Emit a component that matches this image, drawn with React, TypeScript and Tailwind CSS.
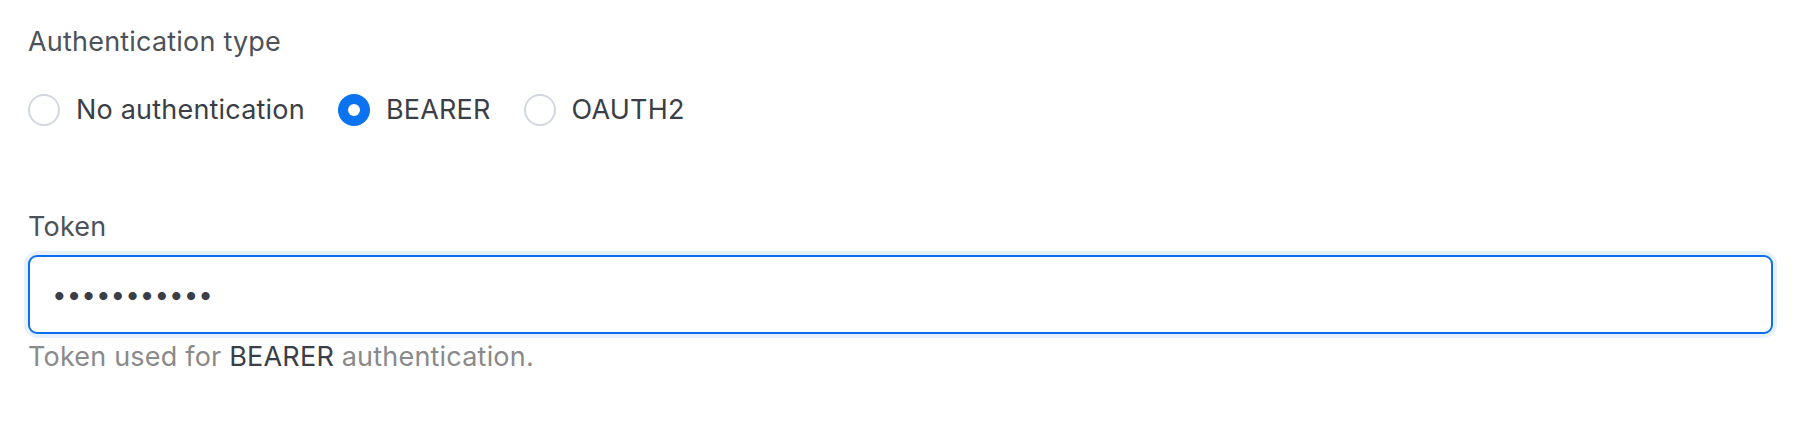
import { useState } from "react";

const OPTIONS = [
  { value: "none", label: "No authentication" },
  { value: "bearer", label: "BEARER" },
  { value: "oauth2", label: "OAUTH2" },
];

export default function App() {
  const [auth, setAuth] = useState("bearer");
  const [token, setToken] = useState("abcdefghijk");

  return (
    <div
      className="w-full h-[422px] bg-white pl-[28px] pr-[31px] pt-[22px]"
      style={{ fontFamily: "Inter, 'Noto Sans', sans-serif" }}
    >
      {/* Auth type */}
      <p className="text-[27px] tracking-[0.2px] leading-[40px] text-[#4d5159]">Authentication type</p>
      <div className="flex items-center gap-[33px] mt-[28px] h-[40px]">
        {OPTIONS.map((o) => {
          const on = auth === o.value;
          return (
            <label key={o.value} className="flex items-center gap-[16px] cursor-pointer">
              <input
                type="radio"
                name="auth"
                checked={on}
                onChange={() => setAuth(o.value)}
                className="sr-only"
              />
              <span
                className={
                  on
                    ? "w-[32px] h-[32px] rounded-full bg-[#0b72f0] flex items-center justify-center"
                    : "w-[32px] h-[32px] rounded-full border-2 border-[#d3d8e0] bg-white"
                }
              >
                {on && <span className="w-[12px] h-[12px] rounded-full bg-white" />}
              </span>
              <span className="text-[27px] tracking-[0.2px] leading-[40px] text-[#3a3e46]">{o.label}</span>
            </label>
          );
        })}
      </div>

      {/* Token */}
      <p className="text-[27px] tracking-[0.2px] leading-[40px] text-[#4d5159] mt-[77px]">Token</p>
      <div className="mt-[8px] rounded-[10px] ring-4 ring-[#e7f1fd]">
        <input
          type="password"
          value={token}
          onChange={(e) => setToken(e.target.value)}
          className="block w-full h-[79px] rounded-[9px] border-2 border-[#0b6ff2] bg-white px-[22px] text-[26px] text-[#3a3e46] outline-none"
        />
      </div>
      <p className="text-[27px] tracking-[0.2px] leading-[40px] text-[#8a8a8a] mt-[3px]">
        Token used for <span className="text-[#3a3e46]">BEARER</span> authentication.
      </p>
    </div>
  );
}
